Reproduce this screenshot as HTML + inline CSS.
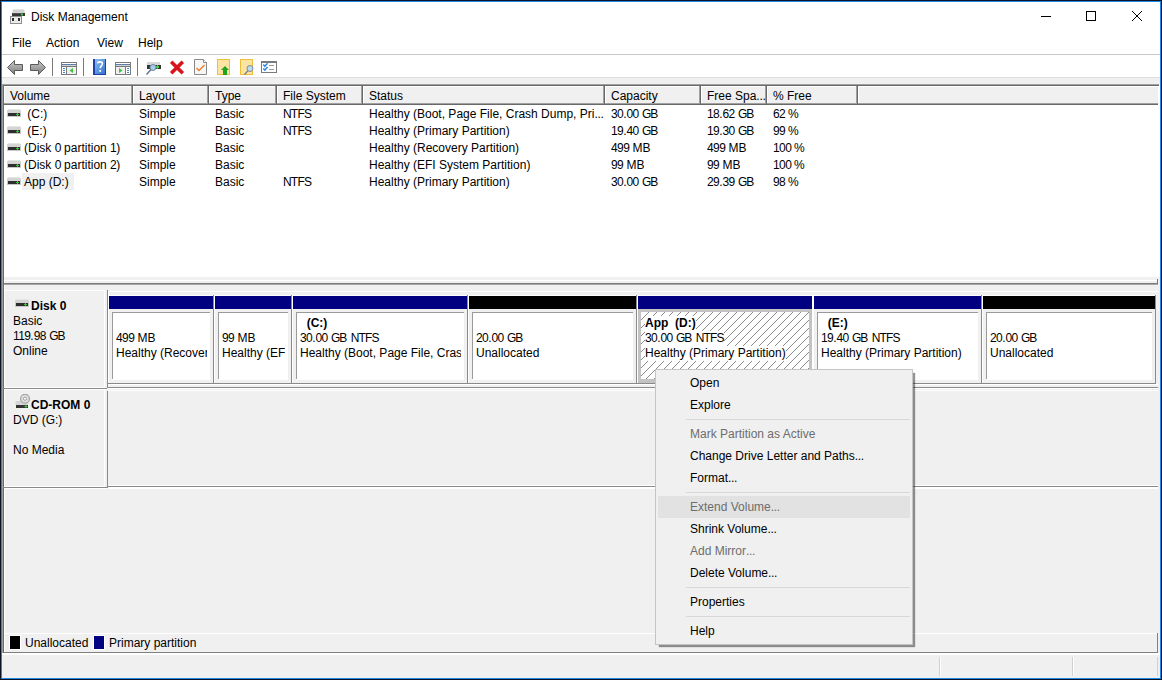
<!DOCTYPE html>
<html><head><meta charset="utf-8">
<style>
*{box-sizing:border-box;margin:0;padding:0}
html,body{width:1162px;height:680px;overflow:hidden;background:#fff}
body{position:relative;font-family:"Liberation Sans",sans-serif;font-size:12px;color:#000}
.a{position:absolute}
.t{position:absolute;white-space:nowrap;line-height:15px}
.b{font-weight:bold}
.g{color:#6d6d6d}
.clip{position:absolute;overflow:hidden;white-space:nowrap}
</style></head><body>

<div class="a" style="left:0px;top:0px;width:1162px;height:680px;background:#0b1420;"></div>
<div class="a" style="left:1px;top:1px;width:1160px;height:678px;background:#1c88ea;"></div>
<div class="a" style="left:2px;top:2px;width:1158px;height:676px;background:#fff;"></div>
<svg class="a" style="left:9px;top:8px" width="18" height="17" viewBox="0 0 18 17">
<rect x="4" y="1" width="11" height="1" fill="#e4e4e4"/><rect x="3.5" y="2" width="12" height="3" fill="#d2d2d2"/><rect x="3" y="5" width="13" height="3" fill="#363636"/><rect x="4" y="5" width="9" height="1" fill="#555"/>
<rect x="12" y="5.5" width="2" height="2" fill="#39c639"/>
<rect x="1.5" y="8.5" width="11" height="7" fill="#eaeaea" stroke="#8f8f8f" stroke-width="1"/>
<rect x="3" y="10" width="2" height="3" fill="#2e2e2e"/><rect x="9" y="10" width="2" height="3" fill="#2e2e2e"/>
</svg>
<div class="t " style="left:31px;top:10px;">Disk Management</div>
<div class="a" style="left:1041px;top:16px;width:10px;height:1px;background:#000;"></div>
<div class="a" style="left:1086px;top:11px;width:10px;height:10px;border:1px solid #000"></div>
<svg class="a" style="left:1131px;top:10px" width="12" height="12" viewBox="0 0 12 12"><path d="M1 1L11 11M11 1L1 11" stroke="#000" stroke-width="1"/></svg>
<div class="t " style="left:12px;top:36px;">File</div>
<div class="t " style="left:46px;top:36px;">Action</div>
<div class="t " style="left:97px;top:36px;">View</div>
<div class="t " style="left:138px;top:36px;">Help</div>
<div class="a" style="left:2px;top:54px;width:1158px;height:1px;background:#c9c9c9;"></div>
<svg class="a" style="left:0;top:56px" width="290" height="21" viewBox="0 56 290 21">
<defs>
<linearGradient id="ag" x1="0" y1="0" x2="0" y2="1"><stop offset="0" stop-color="#c9c9c9"/><stop offset="1" stop-color="#7d7d7d"/></linearGradient>
<linearGradient id="hb" x1="0" y1="0" x2="1" y2="1"><stop offset="0" stop-color="#8fc3f3"/><stop offset="1" stop-color="#2e6fcf"/></linearGradient>
</defs>
<path d="M7.5 67.5L14.5 60.5V64.5H22.5V70.5H14.5V74.5Z" fill="url(#ag)" stroke="#5a5a5a" stroke-width="1" stroke-linejoin="round"/>
<path d="M45.5 67.5L38.5 60.5V64.5H30.5V70.5H38.5V74.5Z" fill="url(#ag)" stroke="#5a5a5a" stroke-width="1" stroke-linejoin="round"/>
<rect x="52" y="58" width="1" height="18" fill="#7a7a7a"/>
<!-- console tree icon -->
<rect x="61.5" y="62.5" width="15" height="12" fill="#fff" stroke="#7a7a7a"/>
<rect x="62" y="64" width="14" height="1" fill="#5b7fa8"/>
<rect x="62" y="65" width="14" height="1" fill="#d0d0d0"/>
<rect x="62" y="66" width="14" height="1" fill="#7a7a7a"/>
<rect x="66" y="67" width="1" height="7" fill="#7a7a7a"/>
<rect x="67" y="67" width="9" height="7" fill="#efefef"/>
<rect x="63" y="68" width="2" height="1" fill="#3c8ad6"/><rect x="63" y="70" width="2" height="1" fill="#3c8ad6"/><rect x="63" y="72" width="2" height="1" fill="#3c8ad6"/>
<path d="M69.5 70.5L73 68V73Z" fill="#3cc23c"/>
<rect x="83" y="58" width="1" height="18" fill="#7a7a7a"/>
<!-- help book -->
<rect x="93" y="59" width="13" height="16" fill="url(#hb)"/>
<rect x="93" y="59" width="2" height="16" fill="#1d3fa6"/>
<rect x="93" y="74" width="13" height="1" fill="#1d3fa6"/>
<rect x="105" y="59" width="1" height="16" fill="#1d3fa6"/>
<path d="M97.6 63.3C97.8 61.4 102.4 61.2 102.4 63.8C102.4 65.8 100.2 65.9 100.2 68.2" fill="none" stroke="#fff" stroke-width="1.6"/>
<rect x="99.3" y="70" width="1.8" height="1.8" fill="#fff"/>
<!-- action pane icon -->
<rect x="115.5" y="62.5" width="15" height="12" fill="#fff" stroke="#7a7a7a"/>
<rect x="116" y="64" width="14" height="1" fill="#5b7fa8"/>
<rect x="116" y="65" width="14" height="1" fill="#d0d0d0"/>
<rect x="116" y="66" width="14" height="1" fill="#7a7a7a"/>
<rect x="125" y="67" width="1" height="7" fill="#7a7a7a"/>
<rect x="116" y="67" width="9" height="7" fill="#efefef"/>
<rect x="127" y="68" width="2" height="1" fill="#3c8ad6"/><rect x="127" y="70" width="2" height="1" fill="#3c8ad6"/><rect x="127" y="72" width="2" height="1" fill="#3c8ad6"/>
<path d="M122.5 70.5L119 68V73Z" fill="#3cc23c"/>
<rect x="137" y="58" width="1" height="18" fill="#7a7a7a"/>
<!-- rescan disk -->
<rect x="147" y="62" width="13" height="3" fill="#d8d8d8"/>
<rect x="147" y="65" width="14" height="4" fill="#333"/>
<rect x="156" y="66" width="3" height="2" fill="#3cd23c"/><rect x="157" y="65" width="1" height="4" fill="#3cd23c"/>
<circle cx="153" cy="67.5" r="3" fill="#a9cbe8" stroke="#6d8aa6" stroke-width="1"/>
<path d="M151 69.5L146.5 74.5" stroke="#5a6f86" stroke-width="1.3"/>
<!-- red X -->
<path d="M171.2 61.7L182.8 73.3M182.8 61.7L171.2 73.3" stroke="#d8141c" stroke-width="3.6"/>
<!-- checklist doc -->
<path d="M194.5 59.5H203.5L206.5 62.5V74.5H194.5Z" fill="#f6f6f6" stroke="#8a8a8a"/>
<path d="M203.5 59.5V62.5H206.5" fill="#fff" stroke="#8a8a8a"/>
<path d="M196.5 68L199 70.5L204.5 65" fill="none" stroke="#f07a2a" stroke-width="1.4"/>
<!-- yellow doc arrow -->
<rect x="217.5" y="59.5" width="12" height="15" fill="#fde4a0" stroke="#efbd3c"/>
<path d="M225 66L229 70H227V75H223V70H221Z" fill="#1ea41e"/>
<!-- yellow doc magnifier -->
<rect x="240.5" y="59.5" width="12" height="15" fill="#fde4a0" stroke="#efbd3c"/>
<circle cx="250" cy="68.5" r="3" fill="#bcdaf2" stroke="#7a8a9a" stroke-width="1"/>
<path d="M247.8 70.8L244.5 74.5" stroke="#6a7a8a" stroke-width="1.2"/>
<!-- properties/checklist window -->
<rect x="261.5" y="61.5" width="15" height="11" fill="#fff" stroke="#7a7a7a"/>
<rect x="262" y="62" width="14" height="1" fill="#7a7a7a"/>
<path d="M263.3 64.6L264.8 66.3L267.6 63.2M263.3 68.4L264.8 70.1L267.6 67" fill="none" stroke="#2f8be6" stroke-width="1.5"/>
<rect x="269" y="65" width="5" height="1" fill="#9a9a9a"/><rect x="269" y="69" width="5" height="1" fill="#9a9a9a"/>
</svg>
<div class="a" style="left:2px;top:77px;width:1158px;height:7px;background:#f0f0f0;"></div>
<div class="a" style="left:2px;top:77px;width:1158px;height:1px;background:#dedede;"></div>
<div class="a" style="left:2px;top:84px;width:1157px;height:1px;background:#a0a0a0;"></div>
<div class="a" style="left:2px;top:84px;width:1px;height:569px;background:#a0a0a0;"></div>
<div class="a" style="left:3px;top:85px;width:1156px;height:1px;background:#696969;"></div>
<div class="a" style="left:3px;top:85px;width:1px;height:568px;background:#696969;"></div>
<div class="a" style="left:4px;top:86px;width:1155px;height:191px;background:#fff;"></div>
<div class="a" style="left:1158px;top:86px;width:2px;height:191px;background:#fff;"></div>
<div class="a" style="left:4px;top:86px;width:129px;height:19px;background:#696969;"></div>
<div class="a" style="left:4px;top:86px;width:128px;height:18px;background:#a0a0a0;"></div>
<div class="a" style="left:4px;top:86px;width:127px;height:17px;background:#fff;"></div>
<div class="a" style="left:5px;top:87px;width:126px;height:16px;background:#f0f0f0;"></div>
<div class="t " style="left:10px;top:89px;">Volume</div>
<div class="a" style="left:133px;top:86px;width:76px;height:19px;background:#696969;"></div>
<div class="a" style="left:133px;top:86px;width:75px;height:18px;background:#a0a0a0;"></div>
<div class="a" style="left:133px;top:86px;width:74px;height:17px;background:#fff;"></div>
<div class="a" style="left:134px;top:87px;width:73px;height:16px;background:#f0f0f0;"></div>
<div class="t " style="left:139px;top:89px;">Layout</div>
<div class="a" style="left:209px;top:86px;width:68px;height:19px;background:#696969;"></div>
<div class="a" style="left:209px;top:86px;width:67px;height:18px;background:#a0a0a0;"></div>
<div class="a" style="left:209px;top:86px;width:66px;height:17px;background:#fff;"></div>
<div class="a" style="left:210px;top:87px;width:65px;height:16px;background:#f0f0f0;"></div>
<div class="t " style="left:215px;top:89px;">Type</div>
<div class="a" style="left:277px;top:86px;width:86px;height:19px;background:#696969;"></div>
<div class="a" style="left:277px;top:86px;width:85px;height:18px;background:#a0a0a0;"></div>
<div class="a" style="left:277px;top:86px;width:84px;height:17px;background:#fff;"></div>
<div class="a" style="left:278px;top:87px;width:83px;height:16px;background:#f0f0f0;"></div>
<div class="t " style="left:283px;top:89px;">File System</div>
<div class="a" style="left:363px;top:86px;width:242px;height:19px;background:#696969;"></div>
<div class="a" style="left:363px;top:86px;width:241px;height:18px;background:#a0a0a0;"></div>
<div class="a" style="left:363px;top:86px;width:240px;height:17px;background:#fff;"></div>
<div class="a" style="left:364px;top:87px;width:239px;height:16px;background:#f0f0f0;"></div>
<div class="t " style="left:369px;top:89px;">Status</div>
<div class="a" style="left:605px;top:86px;width:96px;height:19px;background:#696969;"></div>
<div class="a" style="left:605px;top:86px;width:95px;height:18px;background:#a0a0a0;"></div>
<div class="a" style="left:605px;top:86px;width:94px;height:17px;background:#fff;"></div>
<div class="a" style="left:606px;top:87px;width:93px;height:16px;background:#f0f0f0;"></div>
<div class="t " style="left:611px;top:89px;">Capacity</div>
<div class="a" style="left:701px;top:86px;width:66px;height:19px;background:#696969;"></div>
<div class="a" style="left:701px;top:86px;width:65px;height:18px;background:#a0a0a0;"></div>
<div class="a" style="left:701px;top:86px;width:64px;height:17px;background:#fff;"></div>
<div class="a" style="left:702px;top:87px;width:63px;height:16px;background:#f0f0f0;"></div>
<div class="t " style="left:707px;top:89px;">Free Spa<span style="letter-spacing:-0.3px">...</span></div>
<div class="a" style="left:767px;top:86px;width:91px;height:19px;background:#696969;"></div>
<div class="a" style="left:767px;top:86px;width:90px;height:18px;background:#a0a0a0;"></div>
<div class="a" style="left:767px;top:86px;width:89px;height:17px;background:#fff;"></div>
<div class="a" style="left:768px;top:87px;width:88px;height:16px;background:#f0f0f0;"></div>
<div class="t " style="left:773px;top:89px;">% Free</div>
<div class="a" style="left:858px;top:86px;width:300px;height:19px;background:#696969;"></div>
<div class="a" style="left:858px;top:86px;width:300px;height:18px;background:#a0a0a0;"></div>
<div class="a" style="left:858px;top:86px;width:300px;height:17px;background:#fff;"></div>
<div class="a" style="left:859px;top:87px;width:299px;height:16px;background:#f0f0f0;"></div>
<div class="a" style="left:22px;top:173px;width:52px;height:17px;background:#f0f0f0;"></div>
<svg class="a" style="left:7px;top:109px" width="14" height="8" viewBox="0 0 14 8"><rect x="1" y="0" width="12" height="1" fill="#e4e4e4"/><rect x="0" y="1" width="14" height="3" fill="#d4d4d4"/><rect x="0" y="4" width="14" height="4" fill="#c8c8c8"/><rect x="1" y="4" width="12" height="3" fill="#2e2e2e"/><rect x="9" y="5" width="3" height="1" fill="#35c435"/><rect x="10" y="4" width="1" height="3" fill="#35c435"/></svg>
<div class="t " style="left:24px;top:107px;">&nbsp;(C:)</div>
<div class="t " style="left:139px;top:107px;">Simple</div>
<div class="t " style="left:215px;top:107px;">Basic</div>
<div class="t " style="left:283px;top:107px;"><span style="letter-spacing:-0.8px">NTFS</span></div>
<div class="t " style="left:369px;top:107px;">Healthy (Boot, Page File, Crash Dump, Pri<span style="letter-spacing:-0.3px">...</span></div>
<div class="t " style="left:611px;top:107px;"><span style="letter-spacing:-0.6px">30</span>.<span style="letter-spacing:-0.6px">00</span> <span style="letter-spacing:-1px">G</span>B</div>
<div class="t " style="left:707px;top:107px;"><span style="letter-spacing:-0.6px">18</span>.<span style="letter-spacing:-0.6px">62</span> <span style="letter-spacing:-1px">G</span>B</div>
<div class="t " style="left:773px;top:107px;"><span style="letter-spacing:-0.6px">62</span><span style="letter-spacing:-0.5px"> </span>%</div>
<svg class="a" style="left:7px;top:126px" width="14" height="8" viewBox="0 0 14 8"><rect x="1" y="0" width="12" height="1" fill="#e4e4e4"/><rect x="0" y="1" width="14" height="3" fill="#d4d4d4"/><rect x="0" y="4" width="14" height="4" fill="#c8c8c8"/><rect x="1" y="4" width="12" height="3" fill="#2e2e2e"/><rect x="9" y="5" width="3" height="1" fill="#35c435"/><rect x="10" y="4" width="1" height="3" fill="#35c435"/></svg>
<div class="t " style="left:24px;top:124px;">&nbsp;(E:)</div>
<div class="t " style="left:139px;top:124px;">Simple</div>
<div class="t " style="left:215px;top:124px;">Basic</div>
<div class="t " style="left:283px;top:124px;"><span style="letter-spacing:-0.8px">NTFS</span></div>
<div class="t " style="left:369px;top:124px;">Healthy (Primary Partition)</div>
<div class="t " style="left:611px;top:124px;"><span style="letter-spacing:-0.6px">19</span>.<span style="letter-spacing:-0.6px">40</span> <span style="letter-spacing:-1px">G</span>B</div>
<div class="t " style="left:707px;top:124px;"><span style="letter-spacing:-0.6px">19</span>.<span style="letter-spacing:-0.6px">30</span> <span style="letter-spacing:-1px">G</span>B</div>
<div class="t " style="left:773px;top:124px;"><span style="letter-spacing:-0.6px">99</span><span style="letter-spacing:-0.5px"> </span>%</div>
<svg class="a" style="left:7px;top:143px" width="14" height="8" viewBox="0 0 14 8"><rect x="1" y="0" width="12" height="1" fill="#e4e4e4"/><rect x="0" y="1" width="14" height="3" fill="#d4d4d4"/><rect x="0" y="4" width="14" height="4" fill="#c8c8c8"/><rect x="1" y="4" width="12" height="3" fill="#2e2e2e"/><rect x="9" y="5" width="3" height="1" fill="#35c435"/><rect x="10" y="4" width="1" height="3" fill="#35c435"/></svg>
<div class="t " style="left:24px;top:141px;">(Disk&nbsp;<span style="letter-spacing:-0.6px">0</span>&nbsp;partition&nbsp;<span style="letter-spacing:-0.6px">1</span>)</div>
<div class="t " style="left:139px;top:141px;">Simple</div>
<div class="t " style="left:215px;top:141px;">Basic</div>
<div class="t " style="left:369px;top:141px;">Healthy (Recovery Partition)</div>
<div class="t " style="left:611px;top:141px;"><span style="letter-spacing:-0.6px">499</span> MB</div>
<div class="t " style="left:707px;top:141px;"><span style="letter-spacing:-0.6px">499</span> MB</div>
<div class="t " style="left:773px;top:141px;"><span style="letter-spacing:-0.6px">100</span><span style="letter-spacing:-0.5px"> </span>%</div>
<svg class="a" style="left:7px;top:160px" width="14" height="8" viewBox="0 0 14 8"><rect x="1" y="0" width="12" height="1" fill="#e4e4e4"/><rect x="0" y="1" width="14" height="3" fill="#d4d4d4"/><rect x="0" y="4" width="14" height="4" fill="#c8c8c8"/><rect x="1" y="4" width="12" height="3" fill="#2e2e2e"/><rect x="9" y="5" width="3" height="1" fill="#35c435"/><rect x="10" y="4" width="1" height="3" fill="#35c435"/></svg>
<div class="t " style="left:24px;top:158px;">(Disk&nbsp;<span style="letter-spacing:-0.6px">0</span>&nbsp;partition&nbsp;<span style="letter-spacing:-0.6px">2</span>)</div>
<div class="t " style="left:139px;top:158px;">Simple</div>
<div class="t " style="left:215px;top:158px;">Basic</div>
<div class="t " style="left:369px;top:158px;">Healthy (EFI System Partition)</div>
<div class="t " style="left:611px;top:158px;"><span style="letter-spacing:-0.6px">99</span> MB</div>
<div class="t " style="left:707px;top:158px;"><span style="letter-spacing:-0.6px">99</span> MB</div>
<div class="t " style="left:773px;top:158px;"><span style="letter-spacing:-0.6px">100</span><span style="letter-spacing:-0.5px"> </span>%</div>
<svg class="a" style="left:7px;top:177px" width="14" height="8" viewBox="0 0 14 8"><rect x="1" y="0" width="12" height="1" fill="#e4e4e4"/><rect x="0" y="1" width="14" height="3" fill="#d4d4d4"/><rect x="0" y="4" width="14" height="4" fill="#c8c8c8"/><rect x="1" y="4" width="12" height="3" fill="#2e2e2e"/><rect x="9" y="5" width="3" height="1" fill="#35c435"/><rect x="10" y="4" width="1" height="3" fill="#35c435"/></svg>
<div class="t " style="left:24px;top:175px;">App&nbsp;(D:)</div>
<div class="t " style="left:139px;top:175px;">Simple</div>
<div class="t " style="left:215px;top:175px;">Basic</div>
<div class="t " style="left:283px;top:175px;"><span style="letter-spacing:-0.8px">NTFS</span></div>
<div class="t " style="left:369px;top:175px;">Healthy (Primary Partition)</div>
<div class="t " style="left:611px;top:175px;"><span style="letter-spacing:-0.6px">30</span>.<span style="letter-spacing:-0.6px">00</span> <span style="letter-spacing:-1px">G</span>B</div>
<div class="t " style="left:707px;top:175px;"><span style="letter-spacing:-0.6px">29</span>.<span style="letter-spacing:-0.6px">39</span> <span style="letter-spacing:-1px">G</span>B</div>
<div class="t " style="left:773px;top:175px;"><span style="letter-spacing:-0.6px">98</span><span style="letter-spacing:-0.5px"> </span>%</div>
<div class="a" style="left:4px;top:277px;width:1156px;height:7px;background:#f0f0f0;"></div>
<div class="a" style="left:4px;top:280px;width:1153px;height:1px;background:#fff;"></div>
<div class="a" style="left:4px;top:280px;width:1px;height:3px;background:#fff;"></div>
<div class="a" style="left:4px;top:283px;width:1154px;height:1px;background:#7a7a7a;"></div>
<div class="a" style="left:1157px;top:279px;width:1px;height:5px;background:#7a7a7a;"></div>
<div class="a" style="left:4px;top:284px;width:1156px;height:369px;background:#f0f0f0;"></div>
<div class="a" style="left:4px;top:284px;width:1154px;height:1px;background:#a8a8a8;"></div>
<div class="a" style="left:4px;top:285px;width:1px;height:368px;background:#fff;"></div>
<div class="a" style="left:4px;top:290px;width:101px;height:1px;background:#fff;"></div>
<div class="a" style="left:104px;top:290px;width:1px;height:98px;background:#fff;"></div>
<div class="a" style="left:4px;top:387px;width:101px;height:1px;background:#fff;"></div>
<div class="a" style="left:3px;top:388px;width:104px;height:1px;background:#8a8a8a;"></div>
<div class="a" style="left:107px;top:290px;width:1px;height:98px;background:#8a8a8a;"></div>
<div class="a" style="left:4px;top:389px;width:103px;height:1px;background:#fff;"></div>
<svg class="a" style="left:15px;top:299px" width="14" height="8" viewBox="0 0 14 8"><rect x="1" y="0" width="12" height="1" fill="#e4e4e4"/><rect x="0" y="1" width="14" height="3" fill="#d4d4d4"/><rect x="0" y="4" width="14" height="4" fill="#c8c8c8"/><rect x="1" y="4" width="12" height="3" fill="#2e2e2e"/><rect x="9" y="5" width="3" height="1" fill="#35c435"/><rect x="10" y="4" width="1" height="3" fill="#35c435"/></svg>
<div class="t b" style="left:31px;top:299px;">Disk <span style="letter-spacing:-0.6px">0</span></div>
<div class="t " style="left:13px;top:314px;">Basic</div>
<div class="t " style="left:13px;top:329px;"><span style="letter-spacing:-0.6px">119</span>.<span style="letter-spacing:-0.6px">98</span> <span style="letter-spacing:-1px">G</span>B</div>
<div class="t " style="left:13px;top:344px;">Online</div>
<div class="a" style="left:108px;top:291px;width:1050px;height:1px;background:#fff;"></div>
<div class="a" style="left:108px;top:291px;width:1px;height:92px;background:#fff;"></div>
<div class="a" style="left:108px;top:295px;width:1047px;height:1px;background:#fff;"></div>
<div class="a" style="left:109px;top:296px;width:104px;height:13px;background:#000080;"></div>
<div class="a" style="left:112px;top:312px;width:98px;height:68px;background:#fff;"></div>
<div class="a" style="left:112px;top:312px;width:98px;height:1px;background:#9a9a9a;"></div>
<div class="a" style="left:112px;top:312px;width:1px;height:67px;background:#9a9a9a;"></div>
<div class="clip" style="left:116px;top:312px;width:91px;height:66px">
<div class="t" style="left:0;top:19px;"><span style="letter-spacing:-0.6px">499</span> MB</div>
<div class="t" style="left:0;top:34px;">Healthy (Recovery Partition)</div>
</div>
<div class="a" style="left:213px;top:295px;width:1px;height:88px;background:#8a8a8a;"></div>
<div class="a" style="left:214px;top:295px;width:1px;height:88px;background:#fff;"></div>
<div class="a" style="left:215px;top:296px;width:76px;height:13px;background:#000080;"></div>
<div class="a" style="left:218px;top:312px;width:70px;height:68px;background:#fff;"></div>
<div class="a" style="left:218px;top:312px;width:70px;height:1px;background:#9a9a9a;"></div>
<div class="a" style="left:218px;top:312px;width:1px;height:67px;background:#9a9a9a;"></div>
<div class="clip" style="left:222px;top:312px;width:63px;height:66px">
<div class="t" style="left:0;top:19px;"><span style="letter-spacing:-0.6px">99</span> MB</div>
<div class="t" style="left:0;top:34px;">Healthy (EFI System Partition)</div>
</div>
<div class="a" style="left:291px;top:295px;width:1px;height:88px;background:#8a8a8a;"></div>
<div class="a" style="left:292px;top:295px;width:1px;height:88px;background:#fff;"></div>
<div class="a" style="left:293px;top:296px;width:174px;height:13px;background:#000080;"></div>
<div class="a" style="left:296px;top:312px;width:168px;height:68px;background:#fff;"></div>
<div class="a" style="left:296px;top:312px;width:168px;height:1px;background:#9a9a9a;"></div>
<div class="a" style="left:296px;top:312px;width:1px;height:67px;background:#9a9a9a;"></div>
<div class="clip" style="left:300px;top:312px;width:161px;height:66px">
<div class="t b" style="left:0;top:4px;">&nbsp;&nbsp;(C:)</div>
<div class="t" style="left:0;top:19px;"><span style="letter-spacing:-0.6px">30</span>.<span style="letter-spacing:-0.6px">00</span> <span style="letter-spacing:-1px">G</span>B <span style="letter-spacing:-0.8px">NTFS</span></div>
<div class="t" style="left:0;top:34px;">Healthy (Boot, Page File, Crash Dump, Primary Partition)</div>
</div>
<div class="a" style="left:467px;top:295px;width:1px;height:88px;background:#8a8a8a;"></div>
<div class="a" style="left:468px;top:295px;width:1px;height:88px;background:#fff;"></div>
<div class="a" style="left:469px;top:296px;width:167px;height:13px;background:#000;"></div>
<div class="a" style="left:472px;top:312px;width:161px;height:68px;background:#fff;"></div>
<div class="a" style="left:472px;top:312px;width:161px;height:1px;background:#9a9a9a;"></div>
<div class="a" style="left:472px;top:312px;width:1px;height:67px;background:#9a9a9a;"></div>
<div class="clip" style="left:476px;top:312px;width:154px;height:66px">
<div class="t" style="left:0;top:19px;"><span style="letter-spacing:-0.6px">20</span>.<span style="letter-spacing:-0.6px">00</span> <span style="letter-spacing:-1px">G</span>B</div>
<div class="t" style="left:0;top:34px;">Unallocated</div>
</div>
<div class="a" style="left:636px;top:309px;width:176px;height:74px;background:#c3c3c3;"></div>
<div class="a" style="left:636px;top:295px;width:1px;height:88px;background:#8a8a8a;"></div>
<div class="a" style="left:637px;top:295px;width:1px;height:88px;background:#fff;"></div>
<div class="a" style="left:638px;top:296px;width:174px;height:13px;background:#000080;"></div>
<svg class="a" style="left:641px;top:312px" width="168" height="67"><defs><pattern id="hatch" width="8" height="8" patternUnits="userSpaceOnUse" x="0" y="0"><g fill="#8a8a8a"><rect x="0" y="7" width="1" height="1"/><rect x="1" y="6" width="1" height="1"/><rect x="2" y="5" width="1" height="1"/><rect x="3" y="4" width="1" height="1"/><rect x="4" y="3" width="1" height="1"/><rect x="5" y="2" width="1" height="1"/><rect x="6" y="1" width="1" height="1"/><rect x="7" y="0" width="1" height="1"/></g></pattern></defs><rect width="168" height="67" fill="#fff"/><rect width="168" height="67" fill="url(#hatch)"/></svg>
<div class="clip" style="left:645px;top:312px;width:161px;height:66px">
<div class="t b" style="left:0;top:4px;background:#fff;line-height:13px;padding:1px 0">App&nbsp;&nbsp;(D:)</div>
<div class="t" style="left:0;top:19px;background:#fff;line-height:13px;padding:1px 0"><span style="letter-spacing:-0.6px">30</span>.<span style="letter-spacing:-0.6px">00</span> <span style="letter-spacing:-1px">G</span>B <span style="letter-spacing:-0.8px">NTFS</span></div>
<div class="t" style="left:0;top:34px;background:#fff;line-height:13px;padding:1px 0">Healthy (Primary Partition)</div>
</div>
<div class="a" style="left:812px;top:295px;width:2px;height:88px;background:#fff;"></div>
<div class="a" style="left:814px;top:296px;width:167px;height:13px;background:#000080;"></div>
<div class="a" style="left:817px;top:312px;width:161px;height:68px;background:#fff;"></div>
<div class="a" style="left:817px;top:312px;width:161px;height:1px;background:#9a9a9a;"></div>
<div class="a" style="left:817px;top:312px;width:1px;height:67px;background:#9a9a9a;"></div>
<div class="clip" style="left:821px;top:312px;width:154px;height:66px">
<div class="t b" style="left:0;top:4px;">&nbsp;&nbsp;(E:)</div>
<div class="t" style="left:0;top:19px;"><span style="letter-spacing:-0.6px">19</span>.<span style="letter-spacing:-0.6px">40</span> <span style="letter-spacing:-1px">G</span>B <span style="letter-spacing:-0.8px">NTFS</span></div>
<div class="t" style="left:0;top:34px;">Healthy (Primary Partition)</div>
</div>
<div class="a" style="left:981px;top:295px;width:1px;height:88px;background:#8a8a8a;"></div>
<div class="a" style="left:982px;top:295px;width:1px;height:88px;background:#fff;"></div>
<div class="a" style="left:983px;top:296px;width:172px;height:13px;background:#000;"></div>
<div class="a" style="left:986px;top:312px;width:166px;height:68px;background:#fff;"></div>
<div class="a" style="left:986px;top:312px;width:166px;height:1px;background:#9a9a9a;"></div>
<div class="a" style="left:986px;top:312px;width:1px;height:67px;background:#9a9a9a;"></div>
<div class="clip" style="left:990px;top:312px;width:159px;height:66px">
<div class="t" style="left:0;top:19px;"><span style="letter-spacing:-0.6px">20</span>.<span style="letter-spacing:-0.6px">00</span> <span style="letter-spacing:-1px">G</span>B</div>
<div class="t" style="left:0;top:34px;">Unallocated</div>
</div>
<div class="a" style="left:213px;top:295px;width:1px;height:88px;background:#8a8a8a;"></div>
<div class="a" style="left:291px;top:295px;width:1px;height:88px;background:#8a8a8a;"></div>
<div class="a" style="left:467px;top:295px;width:1px;height:88px;background:#8a8a8a;"></div>
<div class="a" style="left:636px;top:295px;width:1px;height:88px;background:#8a8a8a;"></div>
<div class="a" style="left:981px;top:295px;width:1px;height:88px;background:#8a8a8a;"></div>
<div class="a" style="left:1155px;top:295px;width:1px;height:89px;background:#8a8a8a;"></div>
<div class="a" style="left:108px;top:383px;width:1048px;height:1px;background:#8a8a8a;"></div>
<div class="a" style="left:108px;top:384px;width:1050px;height:1px;background:#fff;"></div>
<div class="a" style="left:108px;top:387px;width:1050px;height:1px;background:#8a8a8a;"></div>
<div class="a" style="left:108px;top:388px;width:1050px;height:1px;background:#fff;"></div>
<div class="a" style="left:4px;top:389px;width:101px;height:1px;background:#fff;"></div>
<div class="a" style="left:104px;top:390px;width:1px;height:97px;background:#fff;"></div>
<div class="a" style="left:107px;top:391px;width:1px;height:97px;background:#8a8a8a;"></div>
<div class="a" style="left:108px;top:390px;width:1050px;height:1px;background:#fff;"></div>
<div class="a" style="left:4px;top:486px;width:101px;height:1px;background:#fff;"></div>
<div class="a" style="left:3px;top:487px;width:104px;height:1px;background:#8a8a8a;"></div>
<div class="a" style="left:4px;top:488px;width:103px;height:1px;background:#fff;"></div>
<div class="a" style="left:107px;top:486px;width:1051px;height:1px;background:#8a8a8a;"></div>
<div class="a" style="left:108px;top:485px;width:1050px;height:1px;background:#fff;"></div>
<div class="a" style="left:108px;top:487px;width:1050px;height:2px;background:#fff;"></div>
<svg class="a" style="left:15px;top:394px" width="15" height="15" viewBox="0 0 15 15"><rect x="0.5" y="7" width="12.5" height="4" fill="#d6d6d6"/><circle cx="10" cy="4.7" r="4.4" fill="#e2e2e2" stroke="#a4a4a4" stroke-width="1.3"/><circle cx="10" cy="4.7" r="1.6" fill="#fff" stroke="#9c9c9c" stroke-width="1"/><rect x="1" y="11" width="12" height="3" fill="#333"/><rect x="9.5" y="12" width="3" height="1" fill="#35c435"/><rect x="10.5" y="11.1" width="1" height="2.8" fill="#35c435"/></svg>
<div class="t b" style="left:31px;top:398px;">CD-ROM <span style="letter-spacing:-0.6px">0</span></div>
<div class="t " style="left:13px;top:413px;">DVD (G:)</div>
<div class="t " style="left:13px;top:443px;">No Media</div>
<div class="a" style="left:4px;top:633px;width:1154px;height:1px;background:#fff;"></div>
<div class="a" style="left:4px;top:652px;width:1154px;height:1px;background:#808080;"></div>
<div class="a" style="left:1157px;top:633px;width:1px;height:20px;background:#808080;"></div>
<div class="a" style="left:9px;top:635px;width:12px;height:15px;background:#fff;"></div>
<div class="a" style="left:10px;top:636px;width:10px;height:13px;background:#000;"></div>
<div class="t " style="left:25px;top:636px;">Unallocated</div>
<div class="a" style="left:93px;top:635px;width:12px;height:15px;background:#fff;"></div>
<div class="a" style="left:94px;top:636px;width:10px;height:13px;background:#000080;"></div>
<div class="t " style="left:109px;top:636px;">Primary partition</div>
<div class="a" style="left:2px;top:653px;width:1158px;height:2px;background:#fff;"></div>
<div class="a" style="left:2px;top:655px;width:1158px;height:23px;background:#f0f0f0;"></div>
<div class="a" style="left:939px;top:657px;width:1px;height:19px;background:#d0d0d0;"></div>
<div class="a" style="left:940px;top:657px;width:1px;height:19px;background:#fff;"></div>
<div class="a" style="left:1072px;top:657px;width:1px;height:19px;background:#d0d0d0;"></div>
<div class="a" style="left:1073px;top:657px;width:1px;height:19px;background:#fff;"></div>
<div class="a" style="left:1157px;top:657px;width:1px;height:19px;background:#d0d0d0;"></div>
<div class="a" style="left:655px;top:369px;width:258px;height:276px;background:#f0f0f0;border:1px solid #c4c4c4;box-shadow:3px 3px 1px -1px rgba(0,0,0,0.42)"></div>
<div class="a" style="left:686px;top:419px;width:224px;height:1px;background:#d7d7d7;"></div>
<div class="a" style="left:686px;top:492px;width:224px;height:1px;background:#d7d7d7;"></div>
<div class="a" style="left:686px;top:587px;width:224px;height:1px;background:#d7d7d7;"></div>
<div class="a" style="left:686px;top:616px;width:224px;height:1px;background:#d7d7d7;"></div>
<div class="a" style="left:658px;top:496px;width:252px;height:22px;background:#e2e2e2;"></div>
<div class="t " style="left:690px;top:376px;">Open</div>
<div class="t " style="left:690px;top:398px;">Explore</div>
<div class="t g" style="left:690px;top:427px;">Mark Partition as Active</div>
<div class="t " style="left:690px;top:449px;">Change Drive Letter and Paths<span style="letter-spacing:-0.3px">...</span></div>
<div class="t " style="left:690px;top:471px;">Format<span style="letter-spacing:-0.3px">...</span></div>
<div class="t g" style="left:690px;top:500px;">Extend Volume<span style="letter-spacing:-0.3px">...</span></div>
<div class="t " style="left:690px;top:522px;">Shrink Volume<span style="letter-spacing:-0.3px">...</span></div>
<div class="t g" style="left:690px;top:544px;">Add Mirror<span style="letter-spacing:-0.3px">...</span></div>
<div class="t " style="left:690px;top:566px;">Delete Volume<span style="letter-spacing:-0.3px">...</span></div>
<div class="t " style="left:690px;top:595px;">Properties</div>
<div class="t " style="left:690px;top:624px;">Help</div>
</body></html>
